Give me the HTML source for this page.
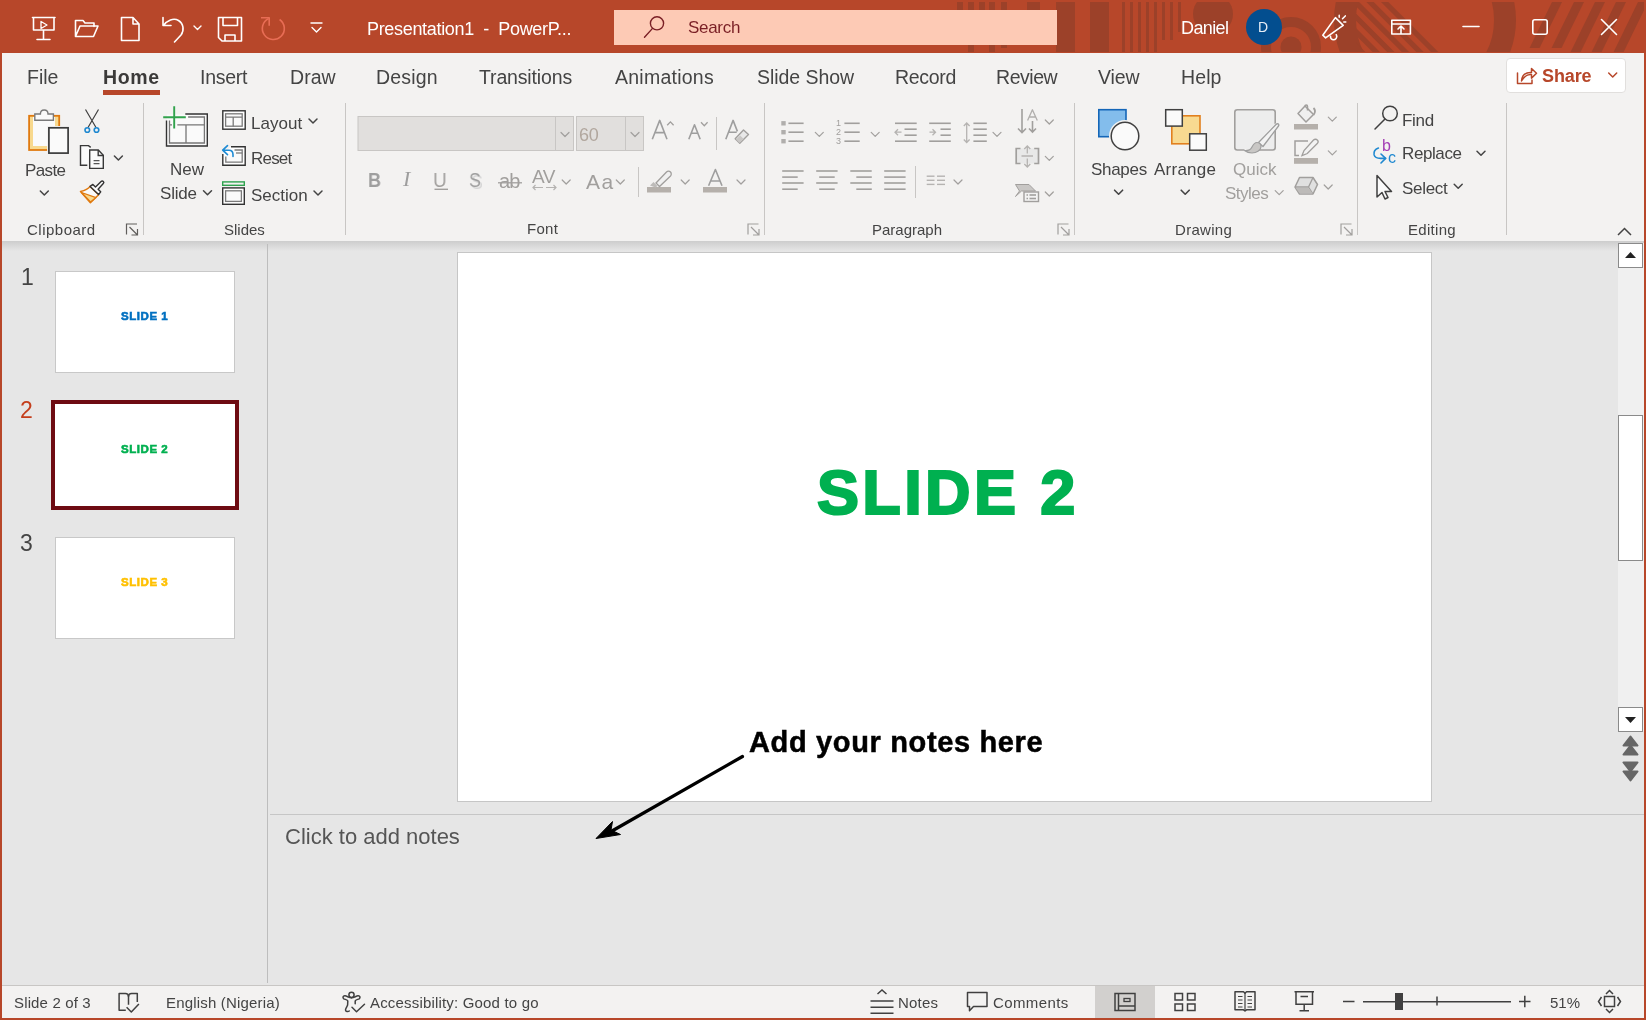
<!DOCTYPE html>
<html><head><meta charset="utf-8">
<style>
*{margin:0;padding:0;box-sizing:border-box}
html,body{width:1646px;height:1020px;overflow:hidden;background:#B7472A;font-family:"Liberation Sans",sans-serif;color:#444;position:relative}
.a{position:absolute;white-space:pre;line-height:1;will-change:transform}
svg{position:absolute;overflow:visible}
.bx{position:absolute}
</style></head><body>

<div class="bx" style="left:2px;top:53px;width:1642px;height:188px;background:#F3F2F1"></div>
<div class="bx" style="left:2px;top:241px;width:1642px;height:744px;background:#E6E6E6"></div>
<div class="bx" style="left:2px;top:241px;width:1642px;height:10px;background:linear-gradient(#CDCDCD,#E6E6E6)"></div>
<div class="bx" style="left:2px;top:985px;width:1642px;height:33px;background:#F3F2F1;border-top:1px solid #C8C6C4"></div>
<!-- TITLE BAR -->
<svg style="left:0;top:0" width="1646" height="53" viewBox="0 0 1646 53">
 <defs><clipPath id="tb"><rect x="900" y="2" width="744" height="50"/></clipPath><clipPath id="tb2"><rect x="1356" y="2" width="200" height="50"/></clipPath></defs>
 <g clip-path="url(#tb)" fill="#9C4129">
  <rect x="957" y="2" width="6" height="9"/><rect x="968" y="2" width="6" height="50"/><rect x="979" y="2" width="6" height="9"/><rect x="989" y="2" width="6" height="50"/><rect x="1001" y="2" width="6" height="46"/><rect x="1027" y="2" width="13" height="9"/>
  <rect x="1056" y="2" width="19" height="50"/>
  <rect x="1090" y="2" width="19" height="50"/>
  <rect x="1122" y="2" width="3" height="50"/><rect x="1130" y="2" width="3" height="50"/>
  <rect x="1138" y="2" width="3" height="50"/><rect x="1146" y="2" width="3" height="50"/>
  <rect x="1154" y="2" width="3" height="50"/><rect x="1162" y="2" width="3" height="38"/>
  <rect x="1170" y="2" width="3" height="38"/><rect x="1178" y="2" width="3" height="30"/>
  <circle cx="1213" cy="14" r="20"/>
  <circle cx="1291" cy="47" r="25" fill="none" stroke="#9C4129" stroke-width="10"/>
  <circle cx="1291" cy="47" r="10.5"/>
  <circle cx="1425" cy="20" r="80" fill="none" stroke="#9C4129" stroke-width="22"/>
  <g clip-path="url(#tb2)"><polygon points="1381.0,2 1388.3,2 1438.3,52 1431.0,52"/><polygon points="1366.4,2 1373.7,2 1423.7,52 1416.4,52"/><polygon points="1351.8,2 1359.1,2 1409.1,52 1401.8,52"/><polygon points="1337.2,2 1344.5,2 1394.5,52 1387.2,52"/><polygon points="1322.6,2 1329.9,2 1379.9,52 1372.6,52"/><polygon points="1308.0,2 1315.3,2 1365.3,52 1358.0,52"/></g>
  <g transform="translate(1552,2) skewX(-26)">
   <rect x="0" y="0" width="10" height="46"/><rect x="22" y="0" width="10" height="46"/><rect x="43" y="0" width="10" height="50"/><rect x="64" y="0" width="10" height="50"/><rect x="86" y="0" width="10" height="50"/>
  </g>
 </g>
 <g fill="none" stroke="#fff" stroke-width="1.6" stroke-linecap="round" stroke-linejoin="round">
  <!-- present -->
  <path d="M32.5 17.5h22.5M33.5 17.5v12.5h20.5v-12.5M43.5 30v9M37 39.5h13"/>
  <path d="M41 21.5l6 3.5l-6 3.5z" stroke-width="1.3"/>
  <!-- open -->
  <path d="M75.5 36.5v-16h7.5l2 2.5h9v3.5M75.5 36.5l4.5-10.5h18l-4.5 10.5z"/>
  <!-- new doc -->
  <path d="M121.5 17.5h11.5l6 6.5v16.5h-17.5z M133 17.5v6.5h6"/>
  <!-- undo -->
  <path d="M163 17.5v8h8M163.5 25.5c3.5-5 10-8 15-5c5 3 6 10 2.5 14.5l-6.5 7"/>
  <path d="M194 26l3.5 3.5l3.5-3.5" stroke-width="1.4"/>
  <!-- save -->
  <path d="M218.5 17.5h23v23.5h-19.5l-3.5-3.5z M223 17.5v8h14.5v-8 M225 41v-6h10v6"/>
  <!-- redo faded -->
  <g stroke="#E86D55" stroke-linecap="butt"><path d="M261 17.7h8.2v8"/><path d="M279.6 19.5A11 11 0 1 1 268.6 18.6"/></g>
  <!-- customize -->
  <path d="M311 23h11M312 27.5l4.5 4.5l4.5-4.5" stroke-width="1.4"/>
  <!-- megaphone -->
  <path d="M1322.8 35.2L1335.4 17.6L1343.2 25.4L1325.6 37.9z"/>
  <path d="M1330.5 36.2c-.3 2 1.2 3.6 3 3.6c2 0 3.3-1.6 3.2-3.4c0-.6-.2-1.2-.5-1.7"/>
  <path d="M1339.2 15.2v2M1342.5 18.8l2.8-2.9M1343.8 21.9h2" stroke-width="1.5"/>
  <!-- ribbon display -->
  <path d="M1391.8 20.2h18.6v13.8h-18.6z M1391.8 24h18.6 M1401 33.5v-7 M1398 29l3-3l3 3"/>
  <!-- window controls -->
  <path d="M1463 26.5h16"/>
  <rect x="1532.8" y="19.8" width="14.4" height="14.4" rx="2"/>
  <path d="M1601.5 19.5l15 15M1616.5 19.5l-15 15"/>
 </g>
</svg>
<div class="a" style="left:367px;top:20px;font-size:18px;color:#fff;letter-spacing:-0.32px">Presentation1  -  PowerP...</div>
<div style="position:absolute;left:614px;top:10px;width:443px;height:35px;background:#FDCAB5"></div>
<svg style="left:0;top:0" width="1" height="1"><g fill="none" stroke="#7A1F25" stroke-width="1.4"><circle cx="657" cy="23.3" r="6.6"/><path d="M652.3 28.6L644.5 37.2" stroke-linecap="round"/></g></svg>
<div class="a" style="left:688px;top:19px;font-size:17px;color:#7A1F25;letter-spacing:-0.3px">Search</div>
<div class="a" style="left:1181px;top:19px;font-size:18px;color:#fff;letter-spacing:-0.6px">Daniel</div>
<div style="position:absolute;left:1246px;top:9px;width:36px;height:36px;border-radius:50%;background:#034E8F"></div>
<div class="a" style="left:1258px;top:20px;font-size:14px;color:#E8EEF6">D</div>

<div class="a" style="left:27px;top:67.99px;font-size:19.5px;color:#444;">File</div>
<div class="a" style="left:103px;top:67.99px;font-size:19.5px;color:#3B3A39;font-weight:700;letter-spacing:0.6px;">Home</div>
<div class="a" style="left:200px;top:67.99px;font-size:19.5px;color:#444;letter-spacing:-0.25px;">Insert</div>
<div class="a" style="left:290px;top:67.99px;font-size:19.5px;color:#444;letter-spacing:0.05px;">Draw</div>
<div class="a" style="left:376px;top:67.99px;font-size:19.5px;color:#444;letter-spacing:0.2px;">Design</div>
<div class="a" style="left:479px;top:67.99px;font-size:19.5px;color:#444;letter-spacing:-0.15px;">Transitions</div>
<div class="a" style="left:615px;top:67.99px;font-size:19.5px;color:#444;letter-spacing:0.25px;">Animations</div>
<div class="a" style="left:757px;top:67.99px;font-size:19.5px;color:#444;letter-spacing:-0.05px;">Slide Show</div>
<div class="a" style="left:895px;top:67.99px;font-size:19.5px;color:#444;letter-spacing:-0.3px;">Record</div>
<div class="a" style="left:996px;top:67.99px;font-size:19.5px;color:#444;letter-spacing:-0.45px;">Review</div>
<div class="a" style="left:1098px;top:67.99px;font-size:19.5px;color:#444;letter-spacing:-0.15px;">View</div>
<div class="a" style="left:1181px;top:67.99px;font-size:19.5px;color:#444;letter-spacing:0.1px;">Help</div>
<div class="bx" style="left:103px;top:90px;width:57px;height:5px;background:#B7472A"></div>
<svg style="left:0;top:0" width="1646" height="1020" viewBox="0 0 1646 1020"><rect x="143.0" y="103" width="1" height="132" fill="#C8C6C4"/><rect x="345.0" y="103" width="1" height="132" fill="#C8C6C4"/><rect x="764.0" y="103" width="1" height="132" fill="#C8C6C4"/><rect x="1074.0" y="103" width="1" height="132" fill="#C8C6C4"/><rect x="1357.0" y="103" width="1" height="132" fill="#C8C6C4"/><rect x="1506.0" y="103" width="1" height="132" fill="#C8C6C4"/><g fill="none" stroke="#605E5C" stroke-width="1.2"><path d="M126.5 234.5v-10.5h10.5M129.5 227.0l8 8M137.5 229.0v6h-6"/></g><g fill="none" stroke="#A19F9D" stroke-width="1.2"><path d="M748.0 234.5v-10.5h10.5M751.0 227.0l8 8M759.0 229.0v6h-6"/></g><g fill="none" stroke="#A19F9D" stroke-width="1.2"><path d="M1058.0 234.5v-10.5h10.5M1061.0 227.0l8 8M1069.0 229.0v6h-6"/></g><g fill="none" stroke="#A19F9D" stroke-width="1.2"><path d="M1341.0 234.5v-10.5h10.5M1344.0 227.0l8 8M1352.0 229.0v6h-6"/></g></svg>
<div class="a" style="left:26.5px;top:221.80px;font-size:15px;color:#444;letter-spacing:0.5px;">Clipboard</div>
<div class="a" style="left:224px;top:221.80px;font-size:15px;color:#444;">Slides</div>
<div class="a" style="left:527px;top:221.30px;font-size:15px;color:#444;letter-spacing:0.3px;">Font</div>
<div class="a" style="left:872px;top:221.80px;font-size:15px;color:#444;">Paragraph</div>
<div class="a" style="left:1175px;top:221.80px;font-size:15px;color:#444;letter-spacing:0.3px;">Drawing</div>
<div class="a" style="left:1408px;top:221.80px;font-size:15px;color:#444;letter-spacing:0.3px;">Editing</div>
<svg style="left:0;top:0" width="1646" height="1020" viewBox="0 0 1646 1020">
<rect x="29.1" y="115.8" width="30.1" height="34.2" fill="#F8D98E" stroke="#E07A10" stroke-width="1.8"/>
<rect x="33" y="117" width="22" height="29" fill="#FAFAFA"/>
<path d="M34.8 120.3v-6.3h5.6c0-2.4 1.6-4 3.8-4s3.8 1.6 3.8 4h5.4v6.3z" fill="#FAFAFA" stroke="#7A7A7A" stroke-width="1.4"/>
<rect x="47.1" y="126" width="22.7" height="28.8" fill="#F3F2F1"/>
<rect x="48.9" y="127.8" width="19.2" height="25.3" fill="#FAFAFA" stroke="#3A3A3A" stroke-width="1.7"/>
<path d="M40.30 191.00l4.00 4.00l4.00 -4.00" fill="none" stroke="#444" stroke-width="1.5" stroke-linecap="round" stroke-linejoin="round"/>
<g fill="none" stroke="#404040" stroke-width="1.2"><path d="M85.5 109.5L96 127.5M98.5 109.5L88 127.5"/></g>
<g fill="none" stroke="#1E88D0" stroke-width="1.6"><circle cx="87.3" cy="130" r="2.3"/><circle cx="96.5" cy="130" r="2.3"/></g>
<g fill="none" stroke="#383838" stroke-width="1.4" stroke-linejoin="miter">
<path d="M87.3 165.3h-6.8V145.6h8l2.2 1.8" fill="#FAFAFA"/>
<path d="M89.7 168.4V150h8.6l5 5.2v13.2z" fill="#FAFAFA"/>
<path d="M98.2 150v5.5h5.2"/>
<path d="M93.6 160.7h5.9M93.6 163.7h5.9" stroke="#555" stroke-width="1.2"/>
</g>
<path d="M114.40 156.00l4.00 4.00l4.00 -4.00" fill="none" stroke="#444" stroke-width="1.5" stroke-linecap="round" stroke-linejoin="round"/>
<path d="M90.1 186.4c-2 2.8-5.5 4.2-9.6 5L90.4 202.7L98.6 194.8z" fill="#FAFAFA" stroke="#E07A10" stroke-width="1.5" stroke-linejoin="round"/>
<path d="M81.5 192.5L96 197.6L90.5 202z" fill="#F8D98E" stroke="#E07A10" stroke-width="1.3" stroke-linejoin="round"/>
<path d="M90.1 186.4l2.8-2l2.6 2.6l5.6-5.6c.6-.6 1.6-.6 2.2 0s.6 1.6 0 2.2l-5.2 5.6l2.6 2.6l-2.1 2.8z" fill="#FAFAFA" stroke="#333" stroke-width="1.4" stroke-linejoin="round"/>
</svg>
<div class="a" style="left:25px;top:162.21px;font-size:17px;color:#444;letter-spacing:-0.6px;">Paste</div>
<svg style="left:0;top:0" width="1646" height="1020" viewBox="0 0 1646 1020">
<g fill="none">
<rect x="167" y="114.5" width="40" height="31" fill="#FAFAFA" stroke="none"/>
<path d="M185.3 114H207.3V146H166.5V120.4" stroke="#333" stroke-width="1.4" fill="none"/>
<path d="M188.1 117H204.4V143H169.5V120.4" stroke="#777" stroke-width="1.3" fill="none"/>
<path d="M177.3 124.8h27M169.5 124.8h2.5M186 124.8v18.2" stroke="#777" stroke-width="1.3"/>
<path d="M163.2 117.3h22.6M174.2 106.2v22.4" stroke="#31A24C" stroke-width="1.9"/>
</g>
<path d="M203.50 190.70l4.00 4.00l4.00 -4.00" fill="none" stroke="#444" stroke-width="1.5" stroke-linecap="round" stroke-linejoin="round"/>
<g fill="none">
<rect x="222.8" y="110.8" width="22.4" height="18.4" stroke="#333" stroke-width="1.4" fill="#FFF"/>
<rect x="225.6" y="113.8" width="16.6" height="12.4" stroke="#7A7A7A" stroke-width="1.3" fill="#FAFAFA"/>
<path d="M225.6 117.1h16.6M233.2 117.1v9.5" stroke="#7A7A7A" stroke-width="1.3"/>
<path d="M231 146.7H245.2V165.2H222.8V154" stroke="#333" stroke-width="1.4" fill="#FFF"/>
<path d="M234.5 150H242.2V162.2H225.8V156.5" stroke="#7A7A7A" stroke-width="1.3" fill="#FAFAFA"/>
<path d="M236 153H242.2" stroke="#7A7A7A" stroke-width="1.3"/>
<path d="M227.5 145.6L222.7 150.2L227.5 154.6M222.7 150.2H229c2.5 0 4 2 4 4.5v1.8" stroke="#1E8BD4" stroke-width="1.6" stroke-linecap="round" stroke-linejoin="round" fill="none"/>
<rect x="222.7" y="181.9" width="21.6" height="3.4" stroke="#2FA24F" stroke-width="1.4" fill="#F3F2F1"/>
<rect x="222.7" y="187.9" width="21.6" height="16.4" stroke="#333" stroke-width="1.4" fill="#FFF"/>
<rect x="225.6" y="190.8" width="15.8" height="10.6" stroke="#7A7A7A" stroke-width="1.3" fill="#FAFAFA"/>
</g>
<path d="M309.00 119.00l4.00 4.00l4.00 -4.00" fill="none" stroke="#444" stroke-width="1.5" stroke-linecap="round" stroke-linejoin="round"/>
<path d="M314.00 191.00l4.00 4.00l4.00 -4.00" fill="none" stroke="#444" stroke-width="1.5" stroke-linecap="round" stroke-linejoin="round"/>
</svg>
<div class="a" style="left:170px;top:161.11px;font-size:17px;color:#444;">New</div>
<div class="a" style="left:160px;top:184.61px;font-size:17px;color:#444;letter-spacing:-0.2px;">Slide</div>
<div class="a" style="left:251px;top:114.61px;font-size:17px;color:#444;letter-spacing:0.05px;">Layout</div>
<div class="a" style="left:251px;top:150.11px;font-size:17px;color:#444;letter-spacing:-0.8px;">Reset</div>
<div class="a" style="left:251px;top:186.61px;font-size:17px;color:#444;">Section</div>
<svg style="left:0;top:0" width="1646" height="1020" viewBox="0 0 1646 1020">
<rect x="358" y="116.5" width="215.5" height="34" fill="#E1DFDD" stroke="#C8C6C4" stroke-width="1"/>
<path d="M555.5 117v33" stroke="#C8C6C4" stroke-width="1"/>
<path d="M561.00 132.50l4.00 4.00l4.00 -4.00" fill="none" stroke="#A19F9D" stroke-width="1.2" stroke-linecap="round" stroke-linejoin="round"/>
<rect x="576.5" y="116.5" width="67" height="34" fill="#E1DFDD" stroke="#C8C6C4" stroke-width="1"/>
<path d="M625.5 117v33" stroke="#C8C6C4" stroke-width="1"/>
<path d="M631.00 132.50l4.00 4.00l4.00 -4.00" fill="none" stroke="#A19F9D" stroke-width="1.2" stroke-linecap="round" stroke-linejoin="round"/>

<path d="M716.5 117v33" stroke="#C8C6C4" stroke-width="1"/>

<path d="M498 182.8h24" stroke="#A19F9D" stroke-width="1.3"/>
<path d="M434.5 189.3h13.5" stroke="#A19F9D" stroke-width="1.4"/>
<g fill="none" stroke="#B5B3B1" stroke-width="1.2"><path d="M533 187.5h10M535.5 185l-2.5 2.5l2.5 2.5M546 187.5h10M553.5 185l2.5 2.5l-2.5 2.5"/></g>
<path d="M562.20 180.00l4.00 4.00l4.00 -4.00" fill="none" stroke="#A19F9D" stroke-width="1.2" stroke-linecap="round" stroke-linejoin="round"/>
<path d="M616.30 180.00l4.00 4.00l4.00 -4.00" fill="none" stroke="#A19F9D" stroke-width="1.2" stroke-linecap="round" stroke-linejoin="round"/>
<path d="M638.5 167v30" stroke="#C8C6C4" stroke-width="1"/>
<rect x="647" y="187" width="24" height="5.5" fill="#B5B0AB"/>
<path d="M656 183l10.5-11c1-1 3-1 4 0s1 3 0 4l-11 10.5z" fill="#F0F0F0" stroke="#A19F9D" stroke-width="1.3"/>
<path d="M650 185.5l3.5-3.5l4 4l-2 1.5z" fill="#BDBBB9"/>
<path d="M681.20 180.00l4.00 4.00l4.00 -4.00" fill="none" stroke="#A19F9D" stroke-width="1.2" stroke-linecap="round" stroke-linejoin="round"/>
<rect x="703" y="187" width="24" height="5.5" fill="#B5B0AB"/>
<path d="M737.00 180.00l4.00 4.00l4.00 -4.00" fill="none" stroke="#A19F9D" stroke-width="1.2" stroke-linecap="round" stroke-linejoin="round"/>
</svg>
<div class="a" style="left:579px;top:125.76px;font-size:18px;color:#B1A79E;letter-spacing:-0.3px;">60</div>
<svg style="left:0;top:0" width="1646" height="1020" viewBox="0 0 1646 1020"><g fill="none" stroke="#9E9E9E" stroke-width="1.6" stroke-linejoin="round">
<path d="M652.3 139.2L659.7 120.4L667 139.2M654.8 132.6h9.8"/>
<path d="M688.8 139.2L694.5 124.8L700.2 139.2M690.8 133.3h7.4"/>
<path d="M725.8 139.2L733.1 120.4L737.4 131.4M728.4 132.3h8.3"/>
</g>
<g fill="none" stroke="#A19F9D" stroke-width="1.3"><path d="M667.2 125.3l3.2-3.4l3.2 3.4M701 122.3l3.3 3.4l3.3-3.4"/></g>
<path d="M735.2 138.8L743.5 130L748.5 134.6L739.8 143.2z" fill="#E8E8E8" stroke="#A19F9D" stroke-width="1.4" stroke-linejoin="round"/>
<path d="M736 139.6l4.2-4.2l3.5 3.5l-4.2 4.2z" fill="#C9C7C5"/></svg>
<div class="a" style="left:367.5px;top:170.07px;font-size:20px;color:#9E9E9E;font-weight:700;transform:scaleX(0.9);transform-origin:0 0">B</div>
<div class="a" style="left:403px;top:168px;font-size:22px;color:#9E9E9E;font-family:'Liberation Serif',serif;font-style:italic">I</div>
<div class="a" style="left:433px;top:169.22px;font-size:21px;color:#A19F9D;transform:scaleX(0.9);transform-origin:0 0">U</div>
<div class="a" style="left:470.5px;top:170.72px;font-size:21px;color:#D6D6D6;transform:scaleX(0.85);transform-origin:0 0">S</div>
<div class="a" style="left:469.3px;top:169.42px;font-size:21px;color:#9E9E9E;transform:scaleX(0.85);transform-origin:0 0">S</div>
<div class="a" style="left:498.5px;top:171.07px;font-size:20px;color:#A19F9D;letter-spacing:-0.8px;">ab</div>
<div class="a" style="left:532px;top:166.92px;font-size:19px;color:#A19F9D;letter-spacing:-0.5px;">AV</div>
<div class="a" style="left:586px;top:170.72px;font-size:21px;color:#A19F9D;letter-spacing:1.5px;">Aa</div>
<svg style="left:0;top:0" width="1646" height="1020" viewBox="0 0 1646 1020"><path d="M708.6 185.8L715.4 169.5L722 185.8M710.6 181h9.4" fill="none" stroke="#9E9E9E" stroke-width="1.6" stroke-linejoin="round"/></svg>
<svg style="left:0;top:0" width="1646" height="1020" viewBox="0 0 1646 1020"><rect x="781.3" y="121.1" width="4.4" height="4.4" fill="#B0AEAC"/><path d="M788.4 123.3H803.6" stroke="#A19F9D" stroke-width="1.6"/><rect x="781.3" y="130.0" width="4.4" height="4.4" fill="#B0AEAC"/><path d="M788.4 132.2H803.6" stroke="#A19F9D" stroke-width="1.6"/><rect x="781.3" y="139.0" width="4.4" height="4.4" fill="#B0AEAC"/><path d="M788.4 141.2H803.6" stroke="#A19F9D" stroke-width="1.6"/><path d="M815.30 132.30l4.00 4.00l4.00 -4.00" fill="none" stroke="#A19F9D" stroke-width="1.2" stroke-linecap="round" stroke-linejoin="round"/><path d="M844.4 123.3H859.7" stroke="#A19F9D" stroke-width="1.6"/><path d="M844.4 132.2H859.7" stroke="#A19F9D" stroke-width="1.6"/><path d="M844.4 141.2H859.7" stroke="#A19F9D" stroke-width="1.6"/><path d="M871.20 132.30l4.00 4.00l4.00 -4.00" fill="none" stroke="#A19F9D" stroke-width="1.2" stroke-linecap="round" stroke-linejoin="round"/><path d="M895 123.3H916.7" stroke="#A19F9D" stroke-width="1.6"/><path d="M904.5 129.2H916.7" stroke="#A19F9D" stroke-width="1.6"/><path d="M904.5 135.2H916.7" stroke="#A19F9D" stroke-width="1.6"/><path d="M895 141.2H916.7" stroke="#A19F9D" stroke-width="1.6"/><path d="M901.5 132.2h-6M898 129.2l-3 3l3 3" fill="none" stroke="#B5B3B1" stroke-width="1.3"/><path d="M929.2 123.3H950.8" stroke="#A19F9D" stroke-width="1.6"/><path d="M940.5 129.2H950.8" stroke="#A19F9D" stroke-width="1.6"/><path d="M940.5 135.2H950.8" stroke="#A19F9D" stroke-width="1.6"/><path d="M929.2 141.2H950.8" stroke="#A19F9D" stroke-width="1.6"/><path d="M929.5 132.2h6M932.5 129.2l3 3l-3 3" fill="none" stroke="#B5B3B1" stroke-width="1.3"/><path d="M973.4 123.3H986.8" stroke="#A19F9D" stroke-width="1.6"/><path d="M973.4 129.2H986.8" stroke="#A19F9D" stroke-width="1.6"/><path d="M973.4 135.2H986.8" stroke="#A19F9D" stroke-width="1.6"/><path d="M973.4 141.2H986.8" stroke="#A19F9D" stroke-width="1.6"/><path d="M966.7 123v19.5M963.8 126l2.9-3l2.9 3M963.8 139.5l2.9 3l2.9-3" fill="none" stroke="#B5B3B1" stroke-width="1.3"/><path d="M993.00 132.30l4.00 4.00l4.00 -4.00" fill="none" stroke="#A19F9D" stroke-width="1.2" stroke-linecap="round" stroke-linejoin="round"/><path d="M1022 109v23.5M1018 128.5l4 4l4-4M1032.5 121v11.5M1029 128.5l3.5 3.5l3.5-3.5" fill="none" stroke="#A19F9D" stroke-width="1.6"/><path d="M1045.30 120.00l4.00 4.00l4.00 -4.00" fill="none" stroke="#A19F9D" stroke-width="1.2" stroke-linecap="round" stroke-linejoin="round"/><rect x="1016" y="148.5" width="22.5" height="15" fill="#E8E8E8"/><path d="M1020.5 148.5h-4.3v15h4.3M1034.2 148.5h4.3v15h-4.3" fill="none" stroke="#A19F9D" stroke-width="1.7"/><path d="M1021.5 156h11.5M1027.3 146v7.5M1024.3 149l3-3l3 3M1027.3 158.5v8M1024.3 164l3 3l3-3" fill="none" stroke="#B5B3B1" stroke-width="1.3"/><path d="M1045.30 156.30l4.00 4.00l4.00 -4.00" fill="none" stroke="#A19F9D" stroke-width="1.2" stroke-linecap="round" stroke-linejoin="round"/><path d="M1015.5 184.5h13.5l6.5 6.5h-14l-6 5.5l4-5.5z" fill="#C9C7C5" stroke="#A19F9D" stroke-width="1"/><rect x="1024" y="192" width="14.5" height="9.5" fill="#F3F3F3" stroke="#A19F9D" stroke-width="1.4"/><path d="M1026.5 195H1028" stroke="#A19F9D" stroke-width="1.6"/><path d="M1029.5 195H1036" stroke="#A19F9D" stroke-width="1.6"/><path d="M1026.5 198.5H1028" stroke="#A19F9D" stroke-width="1.6"/><path d="M1029.5 198.5H1036" stroke="#A19F9D" stroke-width="1.6"/><path d="M1045.30 192.00l4.00 4.00l4.00 -4.00" fill="none" stroke="#A19F9D" stroke-width="1.2" stroke-linecap="round" stroke-linejoin="round"/><path d="M782.2 171H803.6" stroke="#A19F9D" stroke-width="1.6"/><path d="M782.2 177.1H797.7" stroke="#A19F9D" stroke-width="1.6"/><path d="M782.2 183H803.6" stroke="#A19F9D" stroke-width="1.6"/><path d="M782.2 189.2H797.7" stroke="#A19F9D" stroke-width="1.6"/><path d="M816.2 171H837.6" stroke="#A19F9D" stroke-width="1.6"/><path d="M819.2 177.1H834.7" stroke="#A19F9D" stroke-width="1.6"/><path d="M816.2 183H837.6" stroke="#A19F9D" stroke-width="1.6"/><path d="M819.2 189.2H834.7" stroke="#A19F9D" stroke-width="1.6"/><path d="M850.3 171H871.6999999999999" stroke="#A19F9D" stroke-width="1.6"/><path d="M856.3 177.1H871.8" stroke="#A19F9D" stroke-width="1.6"/><path d="M850.3 183H871.6999999999999" stroke="#A19F9D" stroke-width="1.6"/><path d="M856.3 189.2H871.8" stroke="#A19F9D" stroke-width="1.6"/><path d="M884.2 171H905.6" stroke="#A19F9D" stroke-width="1.6"/><path d="M884.2 177.1H905.6" stroke="#A19F9D" stroke-width="1.6"/><path d="M884.2 183H905.6" stroke="#A19F9D" stroke-width="1.6"/><path d="M884.2 189.2H905.6" stroke="#A19F9D" stroke-width="1.6"/><path d="M915.5 166v32" stroke="#C8C6C4" stroke-width="1"/><path d="M926.7 176.2H934.5" stroke="#B5B3B1" stroke-width="1.4"/><path d="M937 176.2H945" stroke="#B5B3B1" stroke-width="1.4"/><path d="M926.7 180.3H934.5" stroke="#B5B3B1" stroke-width="1.4"/><path d="M937 180.3H945" stroke="#B5B3B1" stroke-width="1.4"/><path d="M926.7 184.4H934.5" stroke="#B5B3B1" stroke-width="1.4"/><path d="M937 184.4H945" stroke="#B5B3B1" stroke-width="1.4"/><path d="M954.00 180.00l4.00 4.00l4.00 -4.00" fill="none" stroke="#A19F9D" stroke-width="1.2" stroke-linecap="round" stroke-linejoin="round"/></svg>
<div class="a" style="left:836px;top:118.5px;font-size:9px;line-height:9px;color:#A19F9D;width:6px">1<br>2<br>3</div>
<svg style="left:0;top:0" width="1646" height="1020" viewBox="0 0 1646 1020"><path d="M1027.6 120.6L1032.4 109.8L1037.3 120.6M1029.3 117h6.2" fill="none" stroke="#B0AEAC" stroke-width="1.3" stroke-linejoin="round"/></svg>
<svg style="left:0;top:0" width="1646" height="1020" viewBox="0 0 1646 1020">
<rect x="1098.8" y="109.7" width="27.2" height="27" fill="#83BDEC" stroke="#1466B8" stroke-width="1.6"/>
<circle cx="1125" cy="136" r="16" fill="#F3F2F1"/>
<circle cx="1125" cy="136" r="13.8" fill="#FAFAFA" stroke="#404040" stroke-width="1.5"/>
<path d="M1114.60 190.20l4.00 4.00l4.00 -4.00" fill="none" stroke="#444" stroke-width="1.6" stroke-linecap="round" stroke-linejoin="round"/>
<rect x="1171.8" y="115.8" width="28.2" height="28" fill="#F8DA91" stroke="#E2801F" stroke-width="1.6"/>
<rect x="1165.7" y="109.7" width="16.6" height="16.4" fill="#FAFAFA" stroke="#404040" stroke-width="1.5"/>
<rect x="1189.7" y="133.8" width="16.6" height="16.4" fill="#FAFAFA" stroke="#404040" stroke-width="1.5"/>
<path d="M1181.20 190.20l4.00 4.00l4.00 -4.00" fill="none" stroke="#444" stroke-width="1.6" stroke-linecap="round" stroke-linejoin="round"/>
<rect x="1234.8" y="109.8" width="40.4" height="40.2" rx="2.5" fill="#EDEDED" stroke="#A19F9D" stroke-width="1.6"/>
<path d="M1244 151c6 2 12 0 13-5l20-21" stroke="#F3F2F1" stroke-width="5" fill="none"/>
<path d="M1258.5 142.5l17.5-18c1.5-1.5 3.5-.5 2.5 1.5l-15.5 20.5z" fill="#F3F3F3" stroke="#9E9E9E" stroke-width="1.3" stroke-linejoin="round"/>
<path d="M1244.5 150.5c3 .5 6-.5 7.5-3.5c1.5-3 3-4.5 5-4.5c2.5 0 4.5 2 4 4.5c-.5 3.5-4.5 6-9 6c-3 0-5.5-1-7.5-2.5z" fill="#C9C7C5" stroke="#9E9E9E" stroke-width="1.2" stroke-linejoin="round"/>
<path d="M1275.20 190.60l4.00 4.00l4.00 -4.00" fill="none" stroke="#A19F9D" stroke-width="1.2" stroke-linecap="round" stroke-linejoin="round"/>
<path d="M1298 113.5l7-7.5l8.5 8.5l-7.5 7.5z" fill="#EFEFEF" stroke="#A19F9D" stroke-width="1.5" stroke-linejoin="round"/>
<path d="M1305 106.5c0-2 2.5-2 2.5 0v4" fill="none" stroke="#A19F9D" stroke-width="1.5"/>
<path d="M1313.5 115c1.5-2 2-5 0-7" fill="none" stroke="#A19F9D" stroke-width="1.8"/>
<rect x="1294" y="124" width="24" height="5.5" fill="#B5B0AB"/>
<path d="M1328.30 117.20l4.00 4.00l4.00 -4.00" fill="none" stroke="#A19F9D" stroke-width="1.2" stroke-linecap="round" stroke-linejoin="round"/>
<path d="M1308 141h-13v14.5h4" fill="none" stroke="#A19F9D" stroke-width="1.5"/>
<path d="M1302 155.5l2-5l9.5-10.5c1-1 3-1 3.8 0c1 1 1 2.5 0 3.5l-10 10z" fill="#F3F3F3" stroke="#A19F9D" stroke-width="1.3"/>
<rect x="1294" y="158" width="24" height="5.8" fill="#B5B0AB"/>
<path d="M1328.30 150.80l4.00 4.00l4.00 -4.00" fill="none" stroke="#A19F9D" stroke-width="1.2" stroke-linecap="round" stroke-linejoin="round"/>
<path d="M1299.5 177.5h13.5l4.5 7l-4.5 9.5h-13.5l-4.5-7z" fill="#E0E0E0" stroke="#A19F9D" stroke-width="1.5" stroke-linejoin="round"/>
<path d="M1295 187h13.5l4.5-9.5M1308.5 187l4.5 7" fill="none" stroke="#A19F9D" stroke-width="1.3"/>
<path d="M1295.5 187.8h12.8l4.5 5.8h-13z" fill="#BDBBB9"/>
<path d="M1324.20 185.00l4.00 4.00l4.00 -4.00" fill="none" stroke="#A19F9D" stroke-width="1.2" stroke-linecap="round" stroke-linejoin="round"/>
</svg>
<div class="a" style="left:1090.5px;top:161.41px;font-size:17px;color:#444;letter-spacing:-0.3px;">Shapes</div>
<div class="a" style="left:1154px;top:161.41px;font-size:17px;color:#444;letter-spacing:0.25px;">Arrange</div>
<div class="a" style="left:1233px;top:161.41px;font-size:17px;color:#A19F9D;">Quick</div>
<div class="a" style="left:1224.5px;top:184.61px;font-size:17px;color:#A19F9D;letter-spacing:-0.5px;">Styles</div>
<svg style="left:0;top:0" width="1646" height="1020" viewBox="0 0 1646 1020">
<g fill="none" stroke="#404040" stroke-width="1.5">
<circle cx="1390" cy="113.5" r="7.3"/>
<path d="M1385 119l-10 10" stroke-linecap="round"/>
</g>
<g fill="none" stroke="#1E88D0" stroke-width="1.6" stroke-linecap="round" stroke-linejoin="round">
<path d="M1378.4 148.1c-3.5 1.2-4.8 4-4.3 6.8c.6 2.5 3 3.5 6.5 3.5h5"/>
<path d="M1381 154l4.6 4.4l-4.6 4.6"/>
</g>
<path d="M1477.00 151.30l4.00 4.00l4.00 -4.00" fill="none" stroke="#444" stroke-width="1.5" stroke-linecap="round" stroke-linejoin="round"/>
<path d="M1377 175.5v21.5l5-4.5l3 6.5l3-1.5l-3-6h6.5z" fill="#FAFAFA" stroke="#404040" stroke-width="1.5" stroke-linejoin="round"/>
<path d="M1454.20 184.30l4.00 4.00l4.00 -4.00" fill="none" stroke="#444" stroke-width="1.5" stroke-linecap="round" stroke-linejoin="round"/>
</svg>
<div class="a" style="left:1382px;top:138.26px;font-size:16px;color:#A33FB5;">b</div>
<div class="a" style="left:1388.3px;top:150.26px;font-size:16px;color:#1E88D0;">c</div>
<div class="a" style="left:1402px;top:111.51px;font-size:17px;color:#444;letter-spacing:-0.3px;">Find</div>
<div class="a" style="left:1402px;top:145.41px;font-size:17px;color:#444;letter-spacing:-0.4px;">Replace</div>
<div class="a" style="left:1402px;top:179.71px;font-size:17px;color:#444;letter-spacing:-0.3px;">Select</div>
<div class="bx" style="left:1506px;top:57.5px;width:119.5px;height:35px;background:#fff;border:1px solid #E1DFDD;border-radius:4px"></div>
<svg style="left:0;top:0" width="1646" height="1020" viewBox="0 0 1646 1020">
<g fill="none" stroke="#B7472A" stroke-width="1.5" stroke-linejoin="round" stroke-linecap="round">
<path d="M1517.5 73v10.5h14.5v-3.5"/>
<path d="M1521.5 81c.5-5.5 4-8.5 9-8.5h1v-4l5 4.8l-5 4.8v-3.5h-1c-3.5 0-6.5 2-9 6.4z"/>
</g>
<path d="M1608.70 73.00l4.00 4.00l4.00 -4.00" fill="none" stroke="#B7472A" stroke-width="1.5" stroke-linecap="round" stroke-linejoin="round"/>
<path d="M1618 235l6.5-6.5l6.5 6.5" fill="none" stroke="#444" stroke-width="1.5"/>
</svg>
<div class="a" style="left:1541.5px;top:67.16px;font-size:18px;color:#B7472A;font-weight:700;letter-spacing:-0.1px;">Share</div>
<div class="bx" style="left:267px;top:244px;width:1px;height:739px;background:#BDBDBD"></div>
<div class="bx" style="left:457px;top:252px;width:975px;height:550px;background:#fff;border:1px solid #C6C6C6"></div>
<div class="bx" style="left:270px;top:814px;width:1374px;height:1px;background:#C6C6C6"></div>
<div class="a" style="left:285px;top:826.38px;font-size:22px;color:#555;">Click to add notes</div>
<div class="a" style="left:816.5px;top:460.67px;font-size:63px;color:#00B050;font-weight:700;letter-spacing:3.35px;-webkit-text-stroke:2.2px #00B050">SLIDE 2</div>
<div class="a" style="left:748.5px;top:727.95px;font-size:29px;color:#000;font-weight:700;letter-spacing:0.65px;-webkit-text-stroke:0.5px #000">Add your notes here</div>
<div class="bx" style="left:55px;top:271px;width:180px;height:102px;background:#fff;border:1px solid #C8C8C8"></div>
<div class="bx" style="left:51px;top:400px;width:188px;height:110px;background:#fff;border:4px solid #6E0B12"></div>
<div class="bx" style="left:55px;top:537px;width:180px;height:102px;background:#fff;border:1px solid #C8C8C8"></div>
<div class="a" style="left:21px;top:265.53px;font-size:23px;color:#444;">1</div>
<div class="a" style="left:20px;top:398.53px;font-size:23px;color:#C43E1C;">2</div>
<div class="a" style="left:20px;top:531.53px;font-size:23px;color:#444;">3</div>
<div class="a" style="left:121px;top:310.77px;font-size:11.5px;color:#0070C0;font-weight:700;letter-spacing:0.55px;-webkit-text-stroke:0.6px #0070C0">SLIDE 1</div>
<div class="a" style="left:121px;top:443.77px;font-size:11.5px;color:#00B050;font-weight:700;letter-spacing:0.55px;-webkit-text-stroke:0.6px #00B050">SLIDE 2</div>
<div class="a" style="left:121px;top:576.77px;font-size:11.5px;color:#FFC000;font-weight:700;letter-spacing:0.55px;-webkit-text-stroke:0.6px #FFC000">SLIDE 3</div>
<div class="bx" style="left:1618px;top:243px;width:26px;height:488px;background:#F0F0F0"></div>
<div class="bx" style="left:1618px;top:243px;width:25px;height:25px;background:#fff;border:1px solid #8A8A8A"></div>
<div class="bx" style="left:1618px;top:415px;width:25px;height:146px;background:#fff;border:1px solid #8A8A8A"></div>
<div class="bx" style="left:1618px;top:707px;width:25px;height:25px;background:#fff;border:1px solid #8A8A8A"></div>
<svg style="left:0;top:0" width="1646" height="1020" viewBox="0 0 1646 1020">
<path d="M1625 258h11l-5.5-6z" fill="#222"/>
<path d="M1625 717h11l-5.5 6z" fill="#222"/>
<g fill="#666" stroke="#666" stroke-width="2" stroke-linejoin="round">
<path d="M1623.5 745.5l7-9l7 9z"/><path d="M1623.5 754.5l7-9l7 9z"/>
<path d="M1623.5 762.5h14l-7 9z"/><path d="M1623.5 771.5h14l-7 9z"/>
</g>
<g stroke="#000" stroke-width="3.2" stroke-linecap="round"><path d="M742.5 756.5L612 831"/></g>
<path d="M596 838.5L612.5 821.5L611 830L620.5 834.5z" fill="#000" stroke="#000" stroke-width="1" stroke-linejoin="round"/>
</svg>
<div class="a" style="left:13.5px;top:995.30px;font-size:15px;color:#444;letter-spacing:0.15px;">Slide 2 of 3</div>
<div class="a" style="left:165.5px;top:995.30px;font-size:15px;color:#444;letter-spacing:0.18px;">English (Nigeria)</div>
<div class="a" style="left:369.5px;top:995.30px;font-size:15px;color:#444;letter-spacing:0.18px;">Accessibility: Good to go</div>
<div class="a" style="left:897.5px;top:994.80px;font-size:15px;color:#444;letter-spacing:0.2px;">Notes</div>
<div class="a" style="left:992.5px;top:994.80px;font-size:15px;color:#444;letter-spacing:0.4px;">Comments</div>
<div class="a" style="left:1550px;top:994.80px;font-size:15px;color:#444;">51%</div>
<div class="bx" style="left:1095px;top:986px;width:60px;height:32px;background:#D2D0CE"></div>
<svg style="left:0;top:0" width="1646" height="1020" viewBox="0 0 1646 1020">
<g fill="none" stroke="#404040" stroke-width="1.5" stroke-linejoin="round">
<path d="M125.8 1010.2h-6.7V993.6h6.3c1.8 0 3.1 1.3 3.1 3.2v8"/>
<path d="M128.5 996.8c0-1.9 1.3-3.2 3.1-3.2h5.7v8.4"/>
<path d="M126.6 1007.3l4.7 4.7l7.6-8.1"/>
</g>
<g fill="none" stroke="#404040" stroke-width="1.5" stroke-linecap="round" stroke-linejoin="round">
<circle cx="351.5" cy="994.8" r="2.6"/>
<path d="M351.5 997.8C349 997.8 347 996 345 995.8C343 995.6 342.3 997.8 343.8 998.8C345 999.5 347.5 999.5 347.8 1001L347.6 1005C347 1007 345.5 1008.5 345.5 1010C345.5 1011.8 348 1012 349.3 1011"/>
<path d="M351.5 997.8C354 997.8 356 996 358 995.8C360 995.6 360.7 997.8 359.2 998.8C358 999.5 355.5 999.5 355.2 1001V1003.8"/>
<path d="M352 1007.3l4.5 4.4l8-7.4"/>
</g>
<g fill="none" stroke="#404040" stroke-width="1.5">
<path d="M870.5 1001h23M870.5 1007.2h23M870.5 1013.3h23M877.5 994l4.5-4l4.5 4"/>
<path d="M967.5 992.5h19.5v14h-13.5l-4 4.3v-4.3h-2z" stroke-linejoin="round"/>
<rect x="1115" y="993.5" width="20" height="17"/>
<path d="M1118.5 993.5v17M1118.5 1006h16.5"/><rect x="1124" y="998.5" width="6" height="3" stroke-width="1.3"/>
<rect x="1175" y="993.5" width="7.5" height="6.5"/><rect x="1187.5" y="993.5" width="7.5" height="6.5"/>
<rect x="1175" y="1004" width="7.5" height="6.5"/><rect x="1187.5" y="1004" width="7.5" height="6.5"/>
<path d="M1235 991.8h8.5l1.5 1.5l1.5-1.5h8.5v18h-8.5l-1.5 1.2l-1.5-1.2h-8.5z" stroke-linejoin="round"/>
<path d="M1245 993v17M1238 996.5h4.5M1238 1000h4.5M1238 1003.5h4.5M1238 1007h4.5M1247.5 996.5h4.5M1247.5 1000h4.5M1247.5 1003.5h4.5M1247.5 1007h4.5" stroke-width="1.2"/>
<path d="M1294.5 991.8h19.5M1296 991.8v12.5h16.5v-12.5M1304.2 1004.3v6M1299.5 1010.8h9.5M1300.5 996.5h7.5"/>
<path d="M1343 1001.5h11.5M1519 1001.5h11.5M1524.8 995.8v11.5M1363 1001.7h148"/>
<path d="M1437 996.5v9"/>
<path d="M1601.5 997l-3 4.5l3 4.5M1617.5 997l3 4.5l-3 4.5M1606 994l3.5-3.5l3.5 3.5M1606 1009l3.5 3.5l3.5-3.5"/>
<rect x="1604.5" y="996.5" width="10" height="10"/>
</g>
<rect x="1395" y="993" width="8" height="17" fill="#404040"/>
</svg>
</body></html>
